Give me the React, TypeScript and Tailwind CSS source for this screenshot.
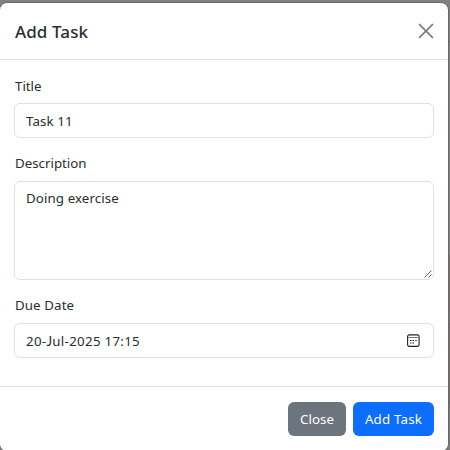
import React from "react";

const field = "w-full rounded-[6px] border border-[#dee2e6] bg-white px-[11px]";

export default function App() {
  return (
    <div className="h-[450px] w-[450px] overflow-hidden bg-[#808080] bg-[linear-gradient(to_bottom,#808080_41px,#6e6e6e_41px,#6e6e6e_42px,#808080_42px,#808080_255px,#806f71_255px,#806f71_313px,#7a7a7a_313px,#7a7a7a_323px,#806f71_323px,#806f71_404px,#7a7a7a_404px)] pt-[2px] font-['Noto_Sans','Open_Sans',sans-serif] text-[13.3px] leading-[21px] text-[#292d31]">
      <div className="-ml-px flex h-[450px] w-[450px] flex-col rounded-[8px] border border-[#686868] bg-white">
        <header className="flex h-[57px] shrink-0 items-center justify-between border-b border-[#dee2e6] pl-[15px] pr-[14px]">
          <h1 className="text-[17px] font-medium tracking-[0.1px]">Add Task</h1>
          <svg width="16" height="16" viewBox="0 0 16 16" className="text-[#7a7a7a]" fill="none" stroke="currentColor" strokeWidth="1.6">
            <path d="M1.1 1.1 14.9 14.9M14.9 1.1 1.1 14.9" />
          </svg>
        </header>
        <main className="flex h-[326px] shrink-0 flex-col px-[14px] pt-[15px]">
          <div className="h-[21px] shrink-0 pl-px pt-px">Title</div>
          <div className={`${field} mt-[7px] flex h-[35px] shrink-0 items-center pt-px`}>
            <span className="tracking-[0.1px]">Task 11</span>
          </div>
          <div className="mt-[15px] h-[21px] shrink-0 pl-px">Description</div>
          <div className={`${field} relative mt-[7px] h-[99px] shrink-0 pt-[6px]`}>
            <span className="tracking-[0.1px]">Doing exercise</span>
            <svg width="8" height="8" viewBox="0 0 8 8" className="absolute bottom-px right-px" stroke="#505050" strokeWidth="0.9">
              <path d="M0.5 7.5 7.5 0.5M4.5 7.5 7.5 4.5" />
            </svg>
          </div>
          <div className="mt-[15px] h-[21px] shrink-0 pl-px tracking-[0.1px]">Due Date</div>
          <div className={`${field} mt-[7px] flex h-[35px] shrink-0 items-center justify-between`}>
            <span className="pt-px tracking-[0.3px]">20-<span className="font-['Lato']">J</span>ul-2025 17:15</span>
            <svg width="13" height="13" viewBox="0 0 13 13" className="mb-px mr-[2.5px]" fill="none" stroke="#212121">
              <rect x="0.6" y="0.9" width="11.5" height="11.5" rx="1.6" strokeWidth="1.1" />
              <path d="M1.2 3.5h10.3" stroke="#777" />
              <path d="M5.5 6.5H7M8.2 6.5h1.5M3 6.5h1.5M3 9h1.5M5.5 9H7" strokeWidth="1.2" />
            </svg>
          </div>
        </main>
        <footer className="flex shrink-0 justify-end gap-[7px] border-t border-[#dee2e6] px-[14px] pt-[15px]">
          <button className="flex h-[34px] w-[58px] items-center justify-center rounded-[6px] bg-[#6c757d] tracking-[0.1px] text-white">
            Close
          </button>
          <button className="flex h-[34px] w-[81px] items-center justify-center rounded-[6px] bg-[#0d6efd] tracking-[0.2px] text-white">
            Add Task
          </button>
        </footer>
      </div>
    </div>
  );
}
